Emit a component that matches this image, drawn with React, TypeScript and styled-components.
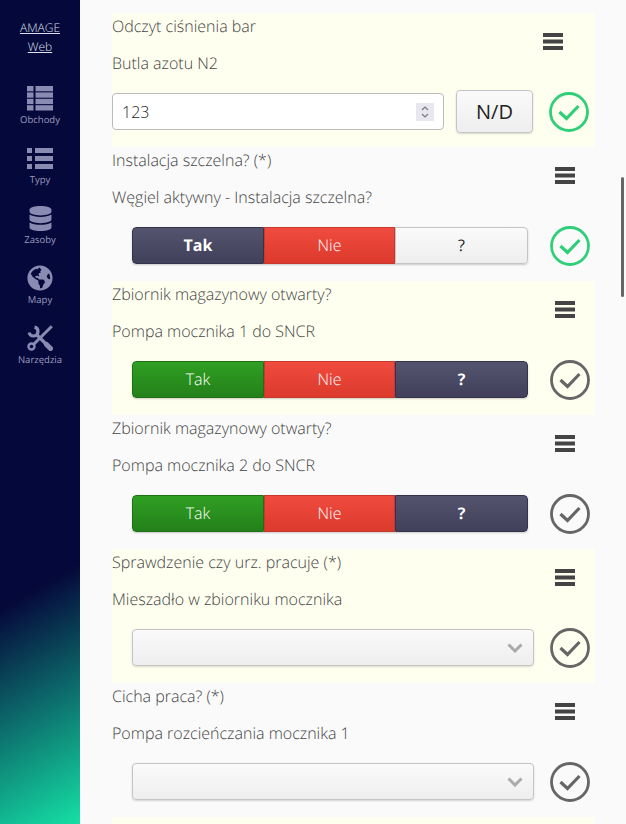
import React from 'react'
import styled, {createGlobalStyle} from 'styled-components'
import {FaDatabase, FaGlobeAmericas} from 'react-icons/fa'

interface Item {
  title: string
  device: string
  control: 'number' | 'segment' | 'select'
  tak?: 'dark' | 'green'
  unknown?: 'light' | 'dark'
  done?: boolean
  tinted?: boolean
}

const items: Item[] = [
  {title: 'Odczyt ciśnienia bar', device: 'Butla azotu N2', control: 'number', done: true, tinted: true},
  {
    title: 'Instalacja szczelna? (*)',
    device: 'Węgiel aktywny - Instalacja szczelna?',
    control: 'segment',
    tak: 'dark',
    unknown: 'light',
    done: true,
  },
  {
    title: 'Zbiornik magazynowy otwarty?',
    device: 'Pompa mocznika 1 do SNCR',
    control: 'segment',
    tak: 'green',
    unknown: 'dark',
    tinted: true,
  },
  {
    title: 'Zbiornik magazynowy otwarty?',
    device: 'Pompa mocznika 2 do SNCR',
    control: 'segment',
    tak: 'green',
    unknown: 'dark',
  },
  {title: 'Sprawdzenie czy urz. pracuje (*)', device: 'Mieszadło w zbiorniku mocznika', control: 'select', tinted: true},
  {title: 'Cicha praca? (*)', device: 'Pompa rozcieńczania mocznika 1', control: 'select'},
]

function TableIcon() {
  return (
    <svg width="26" height="25" viewBox="0 0 26 25" fill="currentColor">
      {[0, 6.4, 12.8, 19.2].map((y) => (
        <g key={y}>
          <rect x="0" y={y} width="6.5" height="5.3" />
          <rect x="8.5" y={y} width="17.5" height="5.3" />
        </g>
      ))}
    </svg>
  )
}

function ListIcon() {
  return (
    <svg width="26" height="21" viewBox="0 0 26 21" fill="currentColor">
      {[0, 8, 16].map((y) => (
        <g key={y}>
          <rect x="0" y={y} width="5" height="5" />
          <rect x="8" y={y} width="18" height="5" />
        </g>
      ))}
    </svg>
  )
}

function ToolsIcon() {
  return (
    <svg width="26" height="26" viewBox="0 0 26 26" fill="none" stroke="currentColor">
      <path d="M7.5 2.1 A4.5 4.5 0 1 1 2.1 7.5" strokeWidth="3.2" />
      <path d="M9.5 9.5 L20 20" strokeWidth="3.2" />
      <path d="M19.5 19.5 L23.5 23.5" strokeWidth="5" strokeLinecap="round" />
      <path d="M24.8 1.2 L6.5 19.5" strokeWidth="3" />
      <circle cx="4.5" cy="21.5" r="3" strokeWidth="2.4" />
    </svg>
  )
}

function BarsIcon() {
  return (
    <svg width="20" height="17" viewBox="0 0 20 17" fill="#444">
      <rect y="0" width="20" height="4" />
      <rect y="6.5" width="20" height="4" />
      <rect y="13" width="20" height="4" />
    </svg>
  )
}

function CheckIcon({done}: {done?: boolean}) {
  const color = done ? '#2ecf78' : '#666'
  return (
    <svg width="40" height="40" viewBox="0 0 40 40" fill="none" stroke={color}>
      <circle cx="20" cy="20" r="18.5" strokeWidth="2.8" />
      <path d="M10.5 20 L17.5 26.5 L29.5 14" strokeWidth="3.2" />
    </svg>
  )
}

function Segments({tak, unknown}: {tak?: 'dark' | 'green'; unknown?: 'light' | 'dark'}) {
  return (
    <SegmentGroup>
      <Segment $kind={tak === 'dark' ? 'dark' : 'green'}>Tak</Segment>
      <Segment $kind="red">Nie</Segment>
      <Segment $kind={unknown === 'dark' ? 'dark' : 'light'}>?</Segment>
    </SegmentGroup>
  )
}

function App() {
  return (
    <Page>
      <GlobalStyle />
      <Sidebar>
        <Brand>
          <a>AMAGE</a>
          <a>Web</a>
        </Brand>
        <NavItem>
          <NavIcon>
            <TableIcon />
          </NavIcon>
          <span>Obchody</span>
        </NavItem>
        <NavItem>
          <NavIcon>
            <ListIcon />
          </NavIcon>
          <span>Typy</span>
        </NavItem>
        <NavItem>
          <NavIcon>
            <FaDatabase size={25} />
          </NavIcon>
          <span>Zasoby</span>
        </NavItem>
        <NavItem>
          <NavIcon>
            <FaGlobeAmericas size={26} />
          </NavIcon>
          <span>Mapy</span>
        </NavItem>
        <NavItem>
          <NavIcon>
            <ToolsIcon />
          </NavIcon>
          <span>Narzędzia</span>
        </NavItem>
      </Sidebar>
      <Content>
        {items.map((item, i) => (
          <Row key={i} $tinted={item.tinted}>
            <Head>
              <Labels>
                <Label>{item.title}</Label>
                <Label>{item.device}</Label>
              </Labels>
              <MenuButton $wide={item.control === 'number'}>
                <BarsIcon />
              </MenuButton>
            </Head>
            <Controls $flush={item.control === 'number'}>
              {item.control === 'number' && (
                <>
                  <NumberBox>
                    <NumberInput defaultValue="123" />
                    <Spinner>
                      <svg width="10" height="14" viewBox="0 0 10 14" fill="none" stroke="#77778a" strokeWidth="1.2">
                        <path d="M2 5 L5 2 L8 5" />
                        <path d="M2 9 L5 12 L8 9" />
                      </svg>
                    </Spinner>
                  </NumberBox>
                  <NdButton>N/D</NdButton>
                </>
              )}
              {item.control === 'segment' && <Segments tak={item.tak} unknown={item.unknown} />}
              {item.control === 'select' && (
                <SelectBox>
                  <svg width="16" height="10" viewBox="0 0 16 10" fill="none" stroke="#aaa" strokeWidth="3">
                    <path d="M1.5 1.5 L8 8 L14.5 1.5" />
                  </svg>
                </SelectBox>
              )}
              <CheckWrap $flush={item.control === 'number'}>
                <CheckIcon done={item.done} />
              </CheckWrap>
            </Controls>
          </Row>
        ))}
        <Row $tinted />
      </Content>
      <ScrollThumb />
    </Page>
  )
}

export default App

const GlobalStyle = createGlobalStyle`
  html, body {
    margin: 0;
    height: 100%;
    overflow: hidden;
    background: #fafafa;
    font-family: 'Open Sans', 'Liberation Sans', sans-serif;
    text-rendering: geometricPrecision;
  }
`

const Page = styled.div`
  display: flex;
  height: 824px;
  overflow: hidden;
  background: #fafafa;
`

const Sidebar = styled.nav`
  flex: 0 0 80px;
  display: flex;
  flex-direction: column;
  align-items: center;
  background: linear-gradient(150deg, #05083a 0%, #05083a 70%, #15e0a5 100%);
`

const Brand = styled.div`
  display: flex;
  flex-direction: column;
  align-items: center;
  gap: 5px;
  margin-top: 21px;
  margin-bottom: 31px;
  font-size: 12px;
  line-height: 14px;
  font-weight: 300;
  color: #dfe0ee;

  a {
    text-decoration: underline;
  }
`

const NavItem = styled.div`
  display: flex;
  flex-direction: column;
  align-items: center;
  height: 60px;
  color: #8a8bb2;

  span {
    margin-top: 2px;
    font-size: 9.5px;
    line-height: 13px;
    color: #9a9bbd;
  }
`

const NavIcon = styled.div`
  display: flex;
  align-items: center;
  justify-content: center;
  height: 26px;
`

const Content = styled.main`
  width: 482px;
  margin-left: 32px;
  padding-top: 13px;
`

const Row = styled.section<{$tinted?: boolean}>`
  height: 134px;
  background: ${(p) => (p.$tinted ? '#fffff0' : 'transparent')};
`

const Head = styled.div`
  display: flex;
  justify-content: space-between;
  height: 80px;
`

const Labels = styled.div`
  display: flex;
  flex-direction: column;
  gap: 11px;
`

const Label = styled.div`
  font-size: 16px;
  font-weight: 300;
  line-height: 26px;
  color: #444;
`

const MenuButton = styled.div<{$wide?: boolean}>`
  margin-top: 20px;
  margin-right: ${(p) => (p.$wide ? '31px' : '19px')};
  height: 17px;
`

const Controls = styled.div<{$flush?: boolean}>`
  display: flex;
  align-items: center;
  height: 37px;
  padding-left: ${(p) => (p.$flush ? '0' : '20px')};
`

const NumberBox = styled.div`
  display: flex;
  align-items: center;
  box-sizing: border-box;
  width: 332px;
  height: 37px;
  padding: 0 9px;
  background: #fff;
  border: 1px solid #bbb;
  border-radius: 4px;
`

const NumberInput = styled.input`
  flex: 1;
  min-width: 0;
  border: 0;
  outline: 0;
  padding: 0;
  background: transparent;
  font-family: inherit;
  font-size: 16px;
  font-weight: 300;
  color: #222;
`

const Spinner = styled.div`
  display: flex;
  align-items: center;
  justify-content: center;
  width: 18px;
  height: 18px;
  background: #e8e7ee;
`

const NdButton = styled.button`
  box-sizing: border-box;
  width: 77px;
  height: 43px;
  margin-left: 12px;
  padding: 0;
  border: 1px solid #c4c4c8;
  border-radius: 4px;
  background: linear-gradient(#fafafa, #eee);
  box-shadow: 0 1px 2px rgba(0, 0, 0, 0.15);
  font-family: inherit;
  font-size: 20px;
  font-weight: 400;
  color: #222;
`

const SegmentGroup = styled.div`
  display: grid;
  grid-template-columns: 132px 131px 133px;
  height: 37px;
  border-radius: 4px;
  overflow: hidden;
  box-shadow: 0 1px 2px rgba(0, 0, 0, 0.2);
`

const segmentStyles = {
  dark: 'background: linear-gradient(#54546f, #40405a); color: #fff; font-weight: 700; border-color: #33334a;',
  red: 'background: linear-gradient(#ef4b3e, #dc3a2d); color: #fff; border-color: #c9382c;',
  green: 'background: linear-gradient(#2f9f23, #24801a); color: #fff; border-color: #1f7016;',
  light: 'background: linear-gradient(#fafafa, #eee); color: #222; font-weight: 400; border-color: #c4c4c4;',
}

const Segment = styled.div<{$kind: keyof typeof segmentStyles}>`
  display: flex;
  align-items: center;
  justify-content: center;
  box-sizing: border-box;
  padding-bottom: 1px;
  border-width: 1px;
  border-style: solid;
  font-size: 16px;
  font-weight: 300;
  ${(p) => segmentStyles[p.$kind]}

  &:first-child {
    border-radius: 4px 0 0 4px;
  }

  &:last-child {
    border-radius: 0 4px 4px 0;
  }
`

const SelectBox = styled.div`
  display: flex;
  align-items: center;
  justify-content: flex-end;
  box-sizing: border-box;
  width: 402px;
  height: 37px;
  padding-right: 10px;
  border: 1px solid #c4c4c4;
  border-radius: 4px;
  background: linear-gradient(#fafafa, #eee);
  box-shadow: 0 1px 2px rgba(0, 0, 0, 0.15);
`

const CheckWrap = styled.div<{$flush?: boolean}>`
  display: flex;
  margin-left: auto;
  margin-right: ${(p) => (p.$flush ? '5px' : '4px')};
`

const ScrollThumb = styled.div`
  position: absolute;
  top: 177px;
  left: 621px;
  width: 3px;
  height: 120px;
  border-radius: 2px;
  background: #666;
`
